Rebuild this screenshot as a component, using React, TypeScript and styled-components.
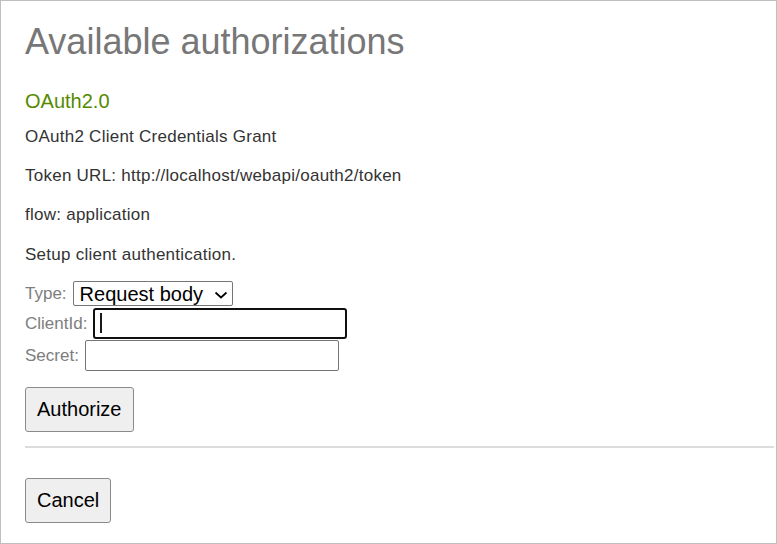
import React from "react";
import styled, { createGlobalStyle } from "styled-components";

const GlobalStyle = createGlobalStyle`
  html, body {
    margin: 0;
    padding: 0;
    background: #ffffff;
  }
  body {
    font-family: "Liberation Sans", Arial, sans-serif;
  }
`;

const Frame = styled.div`
  box-sizing: border-box;
  width: 777px;
  height: 544px;
  border: 1px solid #bfbfbf;
  padding: 20px 2px 0 24px;
  display: flex;
  flex-direction: column;
  align-items: flex-start;
  font-family: "Liberation Sans", Arial, sans-serif;
  overflow: hidden;
`;

const Title = styled.h2`
  margin: 0;
  font-size: 36px;
  line-height: 41px;
  font-weight: normal;
  color: #777777;
`;

const SchemeName = styled.h3`
  margin: 27px 0 0;
  font-size: 20px;
  line-height: 25px;
  font-weight: normal;
  color: #558a00;
`;

const Info = styled.p<{ $first?: boolean }>`
  margin: ${(p) => (p.$first ? 11.5 : 17)}px 0 0;
  font-size: 17px;
  line-height: 22.4px;
  color: #333333;
  letter-spacing: 0.25px;
`;

const Form = styled.form`
  margin: 15px 0 0;
  display: flex;
  flex-direction: column;
  gap: 1.5px;
`;

const Row = styled.div<{ $h: number }>`
  display: flex;
  align-items: center;
  gap: 6px;
  height: ${(p) => p.$h}px;
`;

const Label = styled.label<{ $drop: number }>`
  font-size: 17px;
  color: #7d7d7d;
  padding-top: ${(p) => p.$drop}px;
`;

const Field = styled.div`
  position: relative;
  display: flex;
`;

const Select = styled.select`
  appearance: none;
  -webkit-appearance: none;
  box-sizing: border-box;
  width: 160px;
  height: 25px;
  margin: 0;
  padding: 0 0 0 6px;
  border: 1px solid #767676;
  border-radius: 2px;
  background: #ffffff;
  color: #000000;
  font: 20px "Liberation Sans", Arial, sans-serif;
  outline: none;
`;

const Chevron = styled.svg`
  position: absolute;
  right: 5px;
  top: 50%;
  margin-top: -3px;
  pointer-events: none;
`;

const TextInput = styled.input<{ $focused?: boolean }>`
  box-sizing: border-box;
  width: 254px;
  height: 31px;
  margin: 0;
  padding: 0 6px;
  border: ${(p) => (p.$focused ? "2px solid #101010" : "1px solid #767676")};
  border-radius: ${(p) => (p.$focused ? 3 : 2)}px;
  background: #ffffff;
  font: 20px "Liberation Sans", Arial, sans-serif;
  outline: none;
`;

const Caret = styled.span`
  position: absolute;
  left: 7px;
  top: 5px;
  width: 2px;
  height: 20px;
  background: #1a1a1a;
  pointer-events: none;
`;

const Button = styled.button<{ $top: number }>`
  box-sizing: border-box;
  height: 45px;
  margin: ${(p) => p.$top}px 0 0;
  padding: 0 11px;
  font: 20px "Liberation Sans", Arial, sans-serif;
  color: #000000;
  background: #efefef;
  border: 1px solid #8a8a8a;
  border-radius: 3px;
`;

const Rule = styled.hr`
  align-self: stretch;
  margin: 13.5px 0 0;
  height: 2px;
  border: none;
  background: #dcdcdc;
`;

export default function App() {
  return (
    <>
      <GlobalStyle />
      <Frame>
        <Title>Available authorizations</Title>
        <SchemeName>OAuth2.0</SchemeName>
        <Info $first>OAuth2 Client Credentials Grant</Info>
        <Info>Token URL: http://localhost/webapi/oauth2/token</Info>
        <Info>flow: application</Info>
        <Info>Setup client authentication.</Info>
        <Form onSubmit={(e) => e.preventDefault()}>
          <Row $h={25}>
            <Label $drop={1}>Type:</Label>
            <Field>
              <Select defaultValue="body">
                <option value="body">Request body</option>
                <option value="header">Basic auth header</option>
              </Select>
              <Chevron width="14" height="8" viewBox="0 0 14 8">
                <path d="M1.5 1.5 L7 6.5 L12.5 1.5" fill="none" stroke="#000" strokeWidth="1.7" />
              </Chevron>
            </Field>
          </Row>
          <Row $h={31}>
            <Label $drop={1}>ClientId:</Label>
            <Field>
              <TextInput type="text" $focused />
              <Caret />
            </Field>
          </Row>
          <Row $h={31}>
            <Label $drop={1}>Secret:</Label>
            <Field>
              <TextInput type="text" />
            </Field>
          </Row>
        </Form>
        <Button type="button" $top={16}>Authorize</Button>
        <Rule />
        <Button type="button" $top={30}>Cancel</Button>
      </Frame>
    </>
  );
}
